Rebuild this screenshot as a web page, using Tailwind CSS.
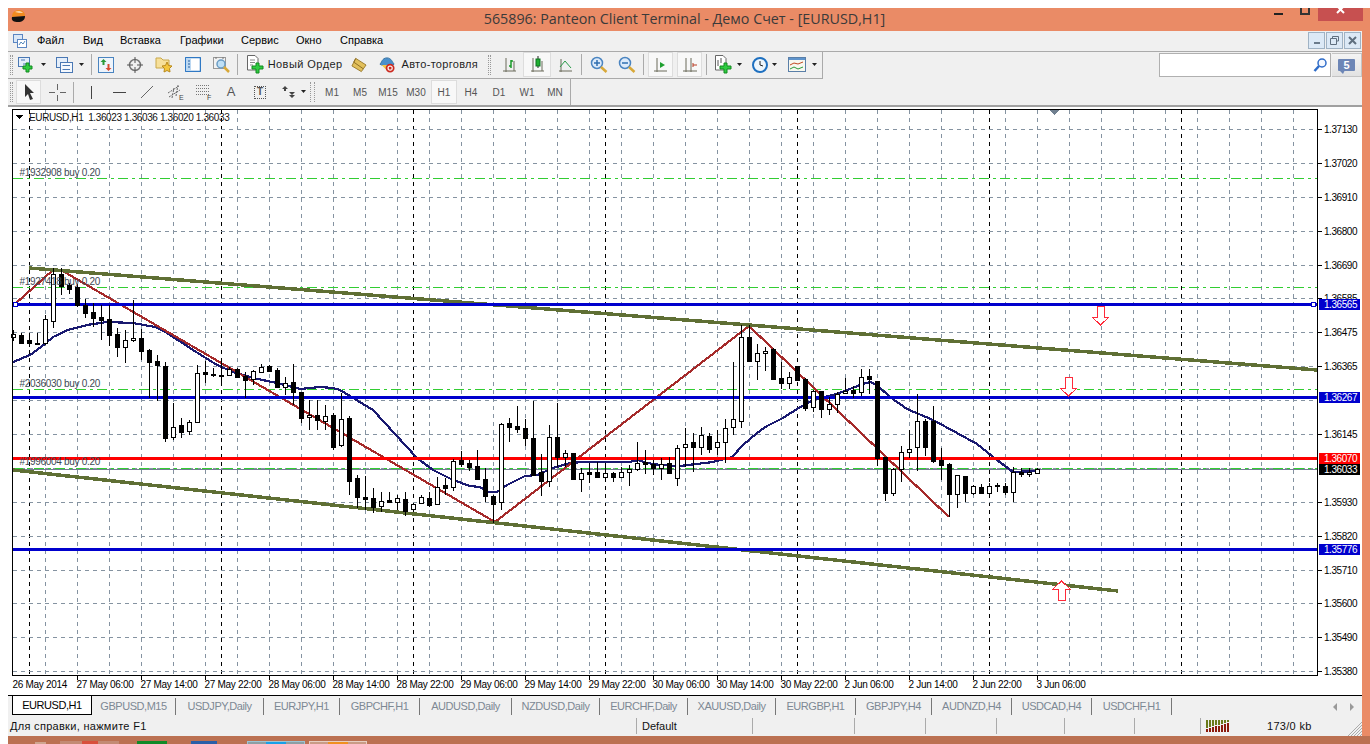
<!DOCTYPE html>
<html lang="ru">
<head>
    <meta charset="UTF-8">
    <title>Panteon Client Terminal</title>
    <script src="https://cdn.jsdelivr.net/npm/@tailwindcss/browser@4"></script>
</head>
<body class="w-[1370px] h-[744px] overflow-hidden bg-white pt-2 pl-2 font-['Liberation_Sans',sans-serif] text-[11px] text-black">
    <div class="flex flex-col h-[736px] bg-[#ea8b66]">
        <!-- title bar -->
        <div class="relative flex items-center justify-center h-[23px] font-['Open_Sans',sans-serif] text-[14.3px] text-[#3a3a3a] pb-[2px]">
            <svg class="absolute left-[3px] top-[1px]" width="15" height="15" viewBox="0 0 15 15"><path d="M1 8 C1 3 4 1 8 1 C12 1 14 4 14 7 Z" fill="#f08a20"/><path d="M4 3 C6 1.500 10 1.500 12 4 L8 4 Z" fill="#f8d0a0"/><path d="M1 8 L14 7 C14 11 11 13 7 13 C3 13 0 12 1 8 Z" fill="#111"/></svg>
            <span class="mr-[9px]">565896: Panteon Client Terminal - Демо Счет - [EURUSD,H1]</span>
            <div class="absolute left-[1266px] top-[5px] w-[9px] h-[2px] bg-[#222]"></div>
            <div class="absolute left-[1292px] top-0 w-[10px] h-[7px] border-2 border-t-0 border-[#333]"></div>
            <div class="absolute left-[1310px] top-0 w-[45px] h-[13px] flex items-start justify-center bg-[#c75050]">
                <svg width="10" height="8" viewBox="0 0 10 8"><path d="M1 -2 L8 5 M8 -2 L1 5" stroke="#fff" stroke-width="2"/></svg>
            </div>
        </div>

        <div class="flex flex-col flex-1 min-h-0 mr-2 bg-[#f0f0f0]">
            <!-- menu -->
            <div class="relative flex items-center h-[21px] border-b border-[#aaa] pb-[1px]">
                <svg class="ml-[5px] mr-[10px]" width="14" height="14" viewBox="0 0 14 14"><rect x=".5" y=".5" width="9" height="8" fill="#dbe8f6" stroke="#5b86c2"/><rect x="4.500" y="5.500" width="9" height="8" fill="#fff" stroke="#5b86c2"/><path d="M6 11 L8 8 L10 10 L12 7" fill="none" stroke="#58b" /></svg>
                <span class="w-[46px]">Файл</span>
                <span class="w-[37px]">Вид</span>
                <span class="w-[60px]">Вставка</span>
                <span class="w-[61px]">Графики</span>
                <span class="w-[55px]">Сервис</span>
                <span class="w-[44px]">Окно</span>
                <span>Справка</span>
                <div class="absolute right-[1px] top-[1px] flex gap-[1px]">
                    <div class="flex items-end justify-center w-[17px] h-[17px] pb-1 bg-[#dce9f6] border border-[#9fb2c4]"><div class="w-[6px] h-[2px] bg-[#6b7b8b]"></div></div>
                    <div class="flex items-center justify-center w-[17px] h-[17px] bg-[#dce9f6] border border-[#9fb2c4]"><svg width="9" height="9" viewBox="0 0 9 9"><path d="M2.500 2 V.5 H8.500 V5 H6.500 M.5 2.500 H6.500 V8.500 H.5 Z" fill="none" stroke="#5f6f7f"/></svg></div>
                    <div class="flex items-center justify-center w-[17px] h-[17px] bg-[#dce9f6] border border-[#9fb2c4]"><svg width="9" height="9" viewBox="0 0 9 9"><path d="M1 1 L8 8 M8 1 L1 8" stroke="#5f6f7f" stroke-width="2"/></svg></div>
                </div>
            </div>

            <!-- main toolbar -->
            <div class="flex h-[27px]">
                <div class="flex items-center w-[815px] h-[27px] pb-[1px] border-b border-r border-[#aaa]">
                    <div class="ml-[2px] w-[3px] h-[20px] border-x border-dotted border-[#999]"></div>
                    <div class="flex items-center justify-center w-7">
                        <svg width="18" height="18" viewBox="0 0 18 18"><rect x=".5" y="1.500" width="11" height="9" fill="#e4eefa" stroke="#4a78b4"/><path d="M3 4 H7 M5 8 H9" stroke="#4a78b4"/><path d="M8 7 H11 V10 H14 V13 H11 V16 H8 V13 H5 V10 H8 Z" fill="#2ecc40" stroke="#138a20"/></svg>
                    </div>
                    <div class="w-[10px]"><svg width="6" height="4"><path d="M0 0 H5 L2.500 3 Z" fill="#222"/></svg></div>
                    <div class="flex items-center justify-center w-7">
                        <svg width="18" height="18" viewBox="0 0 18 18"><rect x=".5" y="1.500" width="11" height="10" fill="#e4eefa" stroke="#4a78b4"/><rect x="4.500" y="6.500" width="12" height="10" fill="#f4f8fd" stroke="#4a78b4"/><path d="M6.500 9.500 H14 M6.500 13.500 H14" stroke="#4a78b4"/></svg>
                    </div>
                    <div class="w-[10px]"><svg width="6" height="4"><path d="M0 0 H5 L2.500 3 Z" fill="#222"/></svg></div>
                    <div class="ml-[2px] w-px h-[21px] bg-[#aaa]"></div>
                    <div class="flex items-center justify-center w-[29px]">
                        <svg width="16" height="16" viewBox="0 0 16 16"><rect x=".5" y=".5" width="15" height="15" fill="#eef4fb" stroke="#4a84c0"/><path d="M5.500 2 L8.500 5 H6.500 V8 H4.500 V5 H2.500 Z" fill="#2a9a3a"/><path d="M10.500 14 L7.500 11 H9.500 V7 H11.500 V11 H13.500 Z" fill="#d84a30"/></svg>
                    </div>
                    <div class="flex items-center justify-center w-[29px]">
                        <svg width="16" height="16" viewBox="0 0 16 16"><circle cx="8" cy="8" r="5.500" fill="none" stroke="#777" stroke-width="1.500"/><path d="M8 0 V6 M8 10 V16 M0 8 H6 M10 8 H16" stroke="#555"/></svg>
                    </div>
                    <div class="flex items-center justify-center w-[29px]">
                        <svg width="18" height="17" viewBox="0 0 18 17"><path d="M1 2 H6 L8 4 H14 V12 H1 Z" fill="#f7e09a" stroke="#c9a84a"/><path d="M12 6 L13.500 9.500 L17 10 L14.500 12.500 L15 16 L12 14.500 L9 16 L9.500 12.500 L7 10 L10.500 9.500 Z" fill="#f4c63c" stroke="#b98a1c"/></svg>
                    </div>
                    <div class="flex items-center justify-center w-[29px]">
                        <svg width="16" height="15" viewBox="0 0 16 15"><rect x=".5" y=".5" width="15" height="14" rx="1" fill="#fff" stroke="#2f78c4" stroke-width="1.500"/><rect x="1" y="1" width="5" height="13" fill="#bcd8f2"/><path d="M3 4 H5 M3 7 H5 M3 10 H5" stroke="#245e9e"/></svg>
                    </div>
                    <div class="flex items-center justify-center w-[29px]">
                        <svg width="18" height="18" viewBox="0 0 18 18"><rect x=".5" y="1.500" width="12" height="11" fill="#f2f2f2" stroke="#999"/><path d="M3 1 V3 M10 1 V3" stroke="#777"/><circle cx="8" cy="8" r="4" fill="#bfe0f6" stroke="#6a9cc4" stroke-width="1.500"/><path d="M11 11 L16 16" stroke="#d8a838" stroke-width="2.500"/></svg>
                    </div>
                    <div class="w-px h-[21px] bg-[#aaa]"></div>
                    <div class="flex items-center justify-center ml-[9px]">
                        <svg width="17" height="19" viewBox="0 0 17 19"><path d="M.5 .5 H8 L11 3.500 V15 H.5 Z" fill="#fff" stroke="#666"/><path d="M3 5 H8 M3 7.500 H8 M3 10 H6" stroke="#888"/><path d="M9 8 H12 V11 H16 V14 H12 V18 H9 V14 H5 V11 H9 Z" fill="#2ecc40" stroke="#138a20"/></svg>
                    </div>
                    <span class="ml-[4px] w-[83px] tracking-[.45px] text-[#1f1f1f]">Новый Ордер</span>
                    <div class="flex items-center justify-center w-4 mr-3">
                        <svg width="17" height="16" viewBox="0 0 17 16"><path d="M5 1 L16 8 L11 15 L1 9 Z" fill="#e2c05c" stroke="#9a7a2a"/><path d="M5 1 L3 5 L13 12" fill="none" stroke="#8a6a20"/></svg>
                    </div>
                    <div class="flex items-center justify-center w-4">
                        <svg width="18" height="18" viewBox="0 0 18 18"><path d="M1 8 C3 7 3 1 9 1 C14 1 15 6 17 8 C14 11 5 11 1 8 Z" fill="#4a90cc" stroke="#2c6a9c"/><path d="M3 9 C6 13 9 15 11 15 L14 9 Z" fill="#f2c84a"/><circle cx="12.500" cy="12.500" r="4" fill="#fff" stroke="#cc2a20" stroke-width="2"/><rect x="11" y="11" width="3" height="3" fill="#cc2a20"/></svg>
                    </div>
                    <span class="ml-[7px] w-[87px] tracking-[.3px] text-[#1f1f1f]">Авто-торговля</span>
                    <div class="w-[3px] h-[20px] border-x border-dotted border-[#999]"></div>
                    <div class="flex items-center justify-center w-7 ml-[4px]">
                        <svg width="15" height="16" viewBox="0 0 15 16"><path d="M1 14 H14 M4 1 V15 M12 14 V4" stroke="#6a6a5a" fill="none"/><path d="M9 3 V11 M9 4 H11 M7 9 H9" stroke="#1a9a2a" stroke-width="1.500" fill="none"/></svg>
                    </div>
                    <div class="flex items-center justify-center w-7 h-[25px] bg-[#f8f8f8] border border-[#ddd]">
                        <svg width="15" height="17" viewBox="0 0 15 17"><path d="M1 15 H14 M3 2 V16 M12 15 V5" stroke="#6a6a5a" fill="none"/><path d="M8 0 V12" stroke="#222"/><rect x="6" y="3" width="4" height="7" fill="#1fb030" stroke="#0f7020"/></svg>
                    </div>
                    <div class="flex items-center justify-center w-7">
                        <svg width="15" height="16" viewBox="0 0 15 16"><path d="M1 14 H14 M3 2 V15" stroke="#6a6a5a" fill="none"/><path d="M2 10 L7 4 L13 11" stroke="#2a9a4a" fill="none"/></svg>
                    </div>
                    <div class="ml-[2px] mr-[3px] w-px h-[21px] bg-[#aaa]"></div>
                    <div class="flex items-center justify-center w-7">
                        <svg width="18" height="18" viewBox="0 0 18 18"><circle cx="7" cy="7" r="5.500" fill="#dceafa" stroke="#4a84c0" stroke-width="1.500"/><path d="M4 7 H10 M7 4 V10" stroke="#2f6fb0" stroke-width="1.500"/><path d="M11 11 L16.500 16" stroke="#d8a838" stroke-width="2.500"/></svg>
                    </div>
                    <div class="flex items-center justify-center w-7">
                        <svg width="18" height="18" viewBox="0 0 18 18"><circle cx="7" cy="7" r="5.500" fill="#dceafa" stroke="#4a84c0" stroke-width="1.500"/><path d="M4 7 H10" stroke="#2f6fb0" stroke-width="1.500"/><path d="M11 11 L16.500 16" stroke="#d8a838" stroke-width="2.500"/></svg>
                    </div>
                    <div class="mx-[2px] w-px h-[21px] bg-[#aaa]"></div>
                    <div class="flex items-center justify-center w-[25px] h-[25px] ml-[2px] bg-[#f8f8f8] border border-[#ddd]">
                        <svg width="15" height="16" viewBox="0 0 15 16"><path d="M1 14 H14 M4 1 V15" stroke="#6a6a5a" fill="none"/><path d="M7 5 L12 8 L7 11 Z" fill="#1fa030"/></svg>
                    </div>
                    <div class="flex items-center justify-center w-[25px] h-[25px] ml-[4px] bg-[#f8f8f8] border border-[#ddd]">
                        <svg width="16" height="16" viewBox="0 0 16 16"><path d="M1 14 H15 M4 1 V15 M9 1 V15" stroke="#6a6a5a" fill="none"/><path d="M11 8 H15 M11 6 V10" stroke="#b83a20"/></svg>
                    </div>
                    <div class="ml-[4px] w-px h-[21px] bg-[#aaa]"></div>
                    <div class="flex items-center justify-center w-7 ml-[2px]">
                        <svg width="17" height="19" viewBox="0 0 17 19"><path d="M.5 .5 H8 L11 3.500 V15 H.5 Z" fill="#fff" stroke="#666"/><path d="M3 5 V11 M6 3 V8" stroke="#555"/><path d="M9 8 H12 V11 H16 V14 H12 V18 H9 V14 H5 V11 H9 Z" fill="#2ecc40" stroke="#138a20"/></svg>
                    </div>
                    <div class="w-[10px]"><svg width="6" height="4"><path d="M0 0 H5 L2.500 3 Z" fill="#222"/></svg></div>
                    <div class="flex items-center justify-center w-[18px] ml-[4px]">
                        <svg width="16" height="16" viewBox="0 0 16 16"><circle cx="8" cy="8" r="7" fill="#eef6fc" stroke="#1e70c0" stroke-width="2"/><path d="M8 4 V8 L11 9" fill="none" stroke="#222"/></svg>
                    </div>
                    <div class="w-[10px] ml-[3px]"><svg width="6" height="4"><path d="M0 0 H5 L2.500 3 Z" fill="#222"/></svg></div>
                    <div class="flex items-center justify-center w-[28px] ml-[1px]">
                        <svg width="18" height="15" viewBox="0 0 18 15"><rect x=".5" y=".5" width="17" height="14" fill="#f8f8f0" stroke="#5a7fa8"/><rect x="1" y="1" width="16" height="2" fill="#5f94cc"/><path d="M2 8 L6 6 L10 7 L15 5" stroke="#c04a20" fill="none"/><path d="M2 12 L6 10 L10 12 L15 10" stroke="#2a9a3a" fill="none"/></svg>
                    </div>
                    <div class="w-[10px] ml-[1px]"><svg width="6" height="4"><path d="M0 0 H5 L2.500 3 Z" fill="#222"/></svg></div>
                </div>
                <div class="flex ml-auto mr-px mt-px h-[24px] border border-[#b0b0b0] bg-white w-[172px] justify-end items-center pr-[3px]">
                    <svg width="14" height="16" viewBox="0 0 14 16"><circle cx="9" cy="6" r="4" fill="#f4f8ff" stroke="#2f6cc8" stroke-width="1.500"/><path d="M6 9 L1.500 14" stroke="#2f6cc8" stroke-width="2.500"/></svg>
                </div>
                <div class="flex items-center justify-center w-[30px] h-[24px] mt-px bg-gradient-to-b from-[#f4f4f4] to-[#e2e2e2] border border-l-0 border-[#c4c4c4]">
                    <div class="relative flex items-center justify-center w-[17px] h-[12px] rounded-[1px] bg-[#6d86b6] text-white font-bold text-[11px] leading-none">5<span class="absolute left-[1px] top-[11px] w-0 h-0 border-t-[4px] border-t-[#6d86b6] border-l-[4px] border-l-transparent border-r-[2px] border-r-transparent"></span></div>
                </div>
            </div>

            <!-- drawing and period toolbar -->
            <div class="flex items-center w-[563px] h-[26px] border-r border-[#aaa] text-[#555]">
                <div class="ml-[2px] w-[3px] h-[20px] border-x border-dotted border-[#999]"></div>
                <div class="flex items-center justify-center w-[25px] h-[24px] ml-[3px] bg-[#f8f8f8] border border-[#ddd]">
                    <svg width="12" height="16" viewBox="0 0 12 16"><path d="M2 0 L11 9 H7 L10 15 L7 16 L5 10 L2 13 Z" fill="#333"/></svg>
                </div>
                <div class="flex items-center justify-center w-7 ml-[2px]">
                    <svg width="17" height="17" viewBox="0 0 17 17"><path d="M0 8.500 H6 M11 8.500 H17 M8.500 0 V6 M8.500 11 V17" stroke="#666"/></svg>
                </div>
                <div class="w-px h-[21px] bg-[#aaa] ml-[2px]"></div>
                <div class="flex items-center justify-center w-7 ml-[3px]"><div class="w-px h-[13px] bg-[#444]"></div></div>
                <div class="flex items-center justify-center w-7"><div class="w-[13px] h-px bg-[#444]"></div></div>
                <div class="flex items-center justify-center w-7">
                    <svg width="14" height="14" viewBox="0 0 14 14"><path d="M1 13 L13 1" stroke="#666"/></svg>
                </div>
                <div class="flex items-center justify-center w-[30px]">
                    <svg width="18" height="18" viewBox="0 0 18 18"><path d="M1 10 L12 3 M2 14 L13 7 M5 15 L7 5 M9 13 L11 2" stroke="#666" fill="none" stroke-dasharray="2 1"/><text x="12" y="17" font-size="7" fill="#444" font-family="Liberation Sans">E</text></svg>
                </div>
                <div class="flex items-center justify-center w-[26px]">
                    <svg width="18" height="18" viewBox="0 0 18 18"><path d="M1 2.500 H14 M1 5.500 H14 M1 8.500 H14 M1 11.500 H14" stroke="#777" stroke-dasharray="1 1"/><text x="12" y="17" font-size="7" fill="#444" font-family="Liberation Sans">F</text></svg>
                </div>
                <div class="flex items-center justify-center w-7 text-[13px] text-[#555]">A</div>
                <div class="flex items-center justify-center w-[30px]">
                    <div class="flex items-center justify-center w-[12px] h-[13px] border border-dotted border-[#555] text-[10px] font-bold text-[#555] leading-none">T</div>
                </div>
                <div class="flex items-center justify-center w-[26px]">
                    <svg width="15" height="14" viewBox="0 0 15 14"><path d="M1 4 L4 1 L7 4 L5 4 V6 H3 V4 Z" fill="#444"/><path d="M8 7 L11 10 L14 7 H12 Z M8 10 L11 13 L14 10" fill="#444"/></svg>
                </div>
                <div class="w-[10px]"><svg width="6" height="4"><path d="M0 0 H5 L2.500 3 Z" fill="#222"/></svg></div>
                <div class="w-[5px] h-[20px] ml-[-1px] border-x border-dotted border-[#999]"></div>
                <div class="flex items-center justify-center w-[28px] ml-[3px] text-[10px]">M1</div>
                <div class="flex items-center justify-center w-[28px] text-[10px]">M5</div>
                <div class="flex items-center justify-center w-[28px] text-[10px]">M15</div>
                <div class="flex items-center justify-center w-[28px] text-[10px]">M30</div>
                <div class="flex items-center justify-center w-[26px] h-[24px] mx-px bg-[#f8f8f8] border border-[#ddd] text-[10px]">H1</div>
                <div class="flex items-center justify-center w-[28px] text-[10px] ml-[-1px]">H4</div>
                <div class="flex items-center justify-center w-[28px] text-[10px]">D1</div>
                <div class="flex items-center justify-center w-[28px] text-[10px]">W1</div>
                <div class="flex items-center justify-center w-[28px] text-[10px]">MN</div>
            </div>
            <div class="h-[2px] bg-[#a0a0a0]"></div>

            <!-- chart -->
            <div class="h-[588px] bg-white">
                <svg id="chart" width="1354" height="588" viewBox="8 107 1354 588" shape-rendering="crispEdges" font-family="Liberation Sans" font-size="10" letter-spacing="-0.3"></svg>
            </div>

            <!-- symbol tabs -->
            <div class="flex items-start h-[21px] border-t border-black text-[#7d8894] tracking-[-0.45px]">
                <div class="flex items-center justify-center ml-[4px] w-[80px] h-[19px] bg-white border-x border-b border-black text-black">EURUSD,H1</div>
                <div class="flex items-center justify-center w-[84px] h-[17px] mt-[2px] border-r border-[#777]">GBPUSD,M15</div>
                <div class="flex items-center justify-center w-[88px] h-[17px] mt-[2px] border-r border-[#777]">USDJPY,Daily</div>
                <div class="flex items-center justify-center w-[76px] h-[17px] mt-[2px] border-r border-[#777]">EURJPY,H1</div>
                <div class="flex items-center justify-center w-[80px] h-[17px] mt-[2px] border-r border-[#777]">GBPCHF,H1</div>
                <div class="flex items-center justify-center w-[92px] h-[17px] mt-[2px] border-r border-[#777]">AUDUSD,Daily</div>
                <div class="flex items-center justify-center w-[88px] h-[17px] mt-[2px] border-r border-[#777]">NZDUSD,Daily</div>
                <div class="flex items-center justify-center w-[88px] h-[17px] mt-[2px] border-r border-[#777]">EURCHF,Daily</div>
                <div class="flex items-center justify-center w-[88px] h-[17px] mt-[2px] border-r border-[#777]">XAUUSD,Daily</div>
                <div class="flex items-center justify-center w-[80px] h-[17px] mt-[2px] border-r border-[#777]">EURGBP,H1</div>
                <div class="flex items-center justify-center w-[76px] h-[17px] mt-[2px] border-r border-[#777]">GBPJPY,H4</div>
                <div class="flex items-center justify-center w-[80px] h-[17px] mt-[2px] border-r border-[#777]">AUDNZD,H4</div>
                <div class="flex items-center justify-center w-[80px] h-[17px] mt-[2px] border-r border-[#777]">USDCAD,H4</div>
                <div class="flex items-center justify-center w-[80px] h-[17px] mt-[2px] border-r border-[#777]">USDCHF,H1</div>
                <div class="flex items-center gap-[12px] ml-auto mr-[7px] h-[17px] mt-[2px]">
                    <svg width="5" height="8"><path d="M4 0 V8 L0 4 Z" fill="#999"/></svg>
                    <svg width="5" height="8"><path d="M0 0 V8 L4 4 Z" fill="#999"/></svg>
                </div>
            </div>

            <!-- status bar -->
            <div class="relative flex items-center h-5 text-[#111]">
                <span class="w-[628px] pl-[2px] tracking-[.3px]">Для справки, нажмите F1</span>
                <div class="w-[116px] h-4 pl-[5px] border-l border-[#aaa]">Default</div>
                <div class="w-[102px] h-4 border-l border-[#aaa]"></div>
                <div class="w-[71px] h-4 border-l border-[#aaa]"></div>
                <div class="w-[71px] h-4 border-l border-[#aaa]"></div>
                <div class="w-[68px] h-4 border-l border-[#aaa]"></div>
                <div class="w-[70px] h-4 border-l border-[#aaa]"></div>
                <div class="w-[66px] h-4 border-l border-[#aaa]"></div>
                <div class="flex items-center h-4 pl-[5px] border-l border-[#aaa]">
                    <svg width="24" height="12" viewBox="0 0 24 12" shape-rendering="crispEdges"><g fill="#6a7a1a"><rect x="0" y="0" width="2" height="8"/><rect x="3" y="0" width="2" height="7"/><rect x="6" y="0" width="2" height="6"/><rect x="9" y="0" width="2" height="5"/><rect x="12" y="0" width="2" height="5"/><rect x="15" y="0" width="2" height="4"/><rect x="18" y="0" width="2" height="3"/><rect x="21" y="0" width="2" height="2"/></g><g fill="#8c1a0c"><rect x="0" y="9" width="2" height="3"/><rect x="3" y="8" width="2" height="4"/><rect x="6" y="7" width="2" height="5"/><rect x="9" y="6" width="2" height="6"/><rect x="12" y="6" width="2" height="6"/><rect x="15" y="5" width="2" height="7"/><rect x="18" y="4" width="2" height="8"/><rect x="21" y="3" width="2" height="9"/></g></svg>
                    <span class="ml-[37px] tracking-[.3px]">173/0 kb</span>
                </div>
                <svg class="absolute right-0 bottom-0" width="15" height="15" viewBox="0 0 15 15"><path d="M15 1 L1 15 M15 4 L4 15 M15 7 L7 15 M15 10 L10 15 M15 13 L13 15" stroke="#aaa"/></svg>
            </div>
        </div>

        <!-- bit of the desktop taskbar under the window -->
        <div class="flex items-end h-2 bg-[#bb7152] shrink-0">
            <div class="ml-[27px] w-[11px] h-[2px] bg-[#cfa58f]"></div>
            <div class="ml-[14px] w-[59px] h-[3px] flex justify-center bg-[#c38b74]"><div class="w-4 h-[3px] bg-[#d8503c]"></div></div>
            <div class="ml-[18px] w-[30px] h-[3px] bg-[#108a28]"></div>
            <div class="ml-[24px] w-[26px] h-[3px] bg-[#2a5fa8]"></div>
            <div class="ml-[30px] w-[58px] h-[3px] flex justify-center bg-[#8d9fa4] border-t border-x border-[#9cc4d4]"><div class="w-5 h-[2px] bg-[#18a0e8]"></div></div>
            <div class="ml-[4px] w-[58px] h-[3px] flex justify-center bg-[#c99c86] border-t border-x border-[#e6cfc2]"><div class="w-5 h-[2px] bg-[#f09020]"></div></div>
        </div>
    </div>

    <script>
        // candles, one every 8px starting at x=13: [top, bottom, high, low, white?]
        const candles = [
            [334,337,330,341,1],[335,343,333,344,0],[340,343,333,347,0],[343,344,333,345,0],[319,343,315,345,1],
            [274,321,268,328,1],[274,286,268,295,0],[285,289,283,294,0],[287,305,284,307,0],[305,313,299,318,0],
            [312,318,303,327,0],[317,320,305,340,0],[319,335,305,346,0],[334,347,328,357,0],[340,347,330,363,1],
            [338,340,300,342,1],[338,351,329,360,0],[350,362,349,398,0],[361,365,355,401,0],[366,438,362,442,0],
            [427,437,403,440,1],[425,432,418,438,0],[422,431,420,435,1],[373,422,365,423,1],[372,374,361,383,0],
            [374,375,368,377,0],[375,376,362,382,0],[369,375,367,376,1],[369,377,368,378,0],[376,380,372,398,0],
            [371,379,370,385,1],[367,372,364,373,1],[366,371,365,372,0],[370,387,368,388,0],[383,387,377,395,1],
            [382,392,364,405,0],[392,418,392,423,0],[415,417,400,430,1],[415,420,400,430,0],[416,421,405,430,1],
            [415,447,413,450,0],[419,445,393,447,1],[418,481,416,495,0],[478,497,475,508,0],[497,499,476,510,0],
            [498,507,488,513,0],[501,506,492,512,1],[500,502,492,503,0],[498,502,495,510,1],[499,511,492,516,0],
            [504,509,503,510,1],[497,503,495,504,1],[498,505,492,507,0],[487,504,477,505,1],[485,488,478,495,0],
            [461,487,459,491,1],[460,464,451,467,0],[463,467,460,471,0],[466,479,450,480,0],[479,496,468,502,0],
            [496,504,495,523,0],[424,502,423,510,1],[423,427,418,442,0],[426,429,406,433,0],[428,438,419,446,0],
            [438,475,401,476,0],[472,481,454,496,0],[437,481,425,487,1],[437,457,403,467,0],[453,457,450,467,1],
            [453,479,453,480,0],[473,479,468,492,1],[472,474,463,483,0],[472,477,462,478,0],[473,477,463,478,1],
            [473,477,472,482,0],[472,477,467,478,1],[469,472,465,486,1],[463,469,442,471,1],[462,464,450,474,0],
            [464,468,460,475,0],[464,468,458,480,1],[463,473,457,474,0],[448,478,445,486,1],[444,447,428,467,1],
            [442,447,433,472,0],[435,447,427,455,1],[436,449,433,453,0],[442,447,430,455,1],[428,442,419,463,1],
            [419,427,362,435,1],[337,421,325,428,1],[337,361,325,362,0],[353,361,344,380,1],[351,353,347,371,1],
            [349,379,348,380,0],[378,383,362,389,0],[377,383,372,389,1],[366,380,366,381,0],[379,408,378,411,0],
            [391,407,390,412,1],[391,409,391,418,0],[404,409,397,415,1],[394,404,392,413,1],[391,393,378,394,1],
            [390,393,386,398,0],[377,392,369,396,1],[376,379,369,394,0],[381,458,381,466,0],[457,493,457,501,0],
            [469,493,468,496,1],[452,469,446,482,1],[449,452,430,458,1],[421,447,394,471,1],[421,447,419,456,0],
            [421,461,406,463,0],[460,465,448,480,0],[464,494,463,517,0],[475,494,475,508,1],[476,493,476,502,0],
            [486,493,485,495,1],[487,493,484,494,0],[486,493,483,495,1],[485,486,483,492,0],[486,492,483,495,0],
            [472,492,467,502,1],[472,474,468,477,0],[472,474,468,477,1],[469,473,468,474,1]
        ];
        const ma = '13,362 30,355 45,344 53,337 68,330 87,325 107,322 133,323 155,327 167,333 193,350 217,365 233,372 253,378 277,383 300,389 320,387 333,388 340,390 373,410 417,458 433,470 453,480 470,486 480,487 487,492 497,492 507,485 525,476 537,475 553,468 570,463 583,462 597,462 630,462 638,460 647,463 660,465 680,466 713,462 732,457 743,445 757,433 767,426 783,418 797,409 813,400 837,394 860,385 870,382 877,385 890,397 907,409 933,420 957,433 977,444 997,460 1013,472 1037,471';
        const prices = [[129,'1.37130'],[163,'1.37020'],[197,'1.36910'],[231,'1.36800'],[265,'1.36690'],[298,'1.36585'],[332,'1.36475'],[366,'1.36365'],[434,'1.36145'],[502,'1.35930'],[536,'1.35820'],[570,'1.35710'],[603,'1.35600'],[637,'1.35490'],[671,'1.35380']];
        const tags = [[304,'1.36565','#0000cd'],[397,'1.36267','#0000cd'],[458,'1.36070','#ff0000'],[469,'1.36033','#000000'],[549,'1.35776','#0000cd']];
        const times = ['27 May 06:00','27 May 14:00','27 May 22:00','28 May 06:00','28 May 14:00','28 May 22:00','29 May 06:00','29 May 14:00','29 May 22:00','30 May 06:00','30 May 14:00','30 May 22:00','2 Jun 06:00','2 Jun 14:00','2 Jun 22:00','3 Jun 06:00'];
        const hGrid = [129,163,197,231,265,298,332,366,400,434,468,502,536,570,603,637,671];

        let s = '';
        // grid
        for (let x = 45; x < 1317; x += 32) s += `<line x1="${x+.5}" y1="110" x2="${x+.5}" y2="675" stroke="#8593a1" stroke-dasharray="4 4"/>`;
        for (let x = 29; x < 1317; x += 192) s += `<line x1="${x+.5}" y1="110" x2="${x+.5}" y2="675" stroke="#000" stroke-dasharray="4 4"/>`;
        hGrid.forEach(y => s += `<line x1="13" y1="${y+.5}" x2="1317" y2="${y+.5}" stroke="#8593a1" stroke-dasharray="4 4"/>`);

        // order lines
        [178,287,389,468].forEach(y => s += `<line x1="13" y1="${y+.5}" x2="1317" y2="${y+.5}" stroke="#32cd32" stroke-dasharray="10 4 3 4"/>`);
        s += `<line x1="13" y1="469.500" x2="1317" y2="469.500" stroke="#708090"/>`;

        // trend lines and levels
        s += `<polyline points="${ma}" fill="none" stroke="#191970" stroke-width="2.200"/>`;
        s += `<polyline points="15,304 53,270 61,270 495,522 749,326 949,517" fill="none" stroke="#a52a2a" stroke-width="2.200"/>`;
        s += `<line x1="29" y1="268" x2="1317" y2="370" stroke="#5f6f34" stroke-width="3.500"/>`;
        s += `<line x1="13" y1="470" x2="1118" y2="591" stroke="#5f6f34" stroke-width="3.500"/>`;
        [304,397,549].forEach(y => s += `<rect x="13" y="${y-1}" width="1304" height="3" fill="#0000cd"/>`);
        s += `<rect x="13" y="457" width="1304" height="3" fill="#ff0000"/>`;
        [15,1313].forEach(x => s += `<rect x="${x-1.5}" y="302.500" width="4" height="4" fill="#fff" stroke="#0000cd"/>`);

        // candles
        candles.forEach((c, i) => {
            const x = 13 + i * 8;
            s += `<line x1="${x+.5}" y1="${c[2]}" x2="${x+.5}" y2="${c[3]}" stroke="#000"/>`;
            s += `<rect x="${x-1.5}" y="${c[0]+.5}" width="4" height="${Math.max(c[1]-c[0],1)}" fill="${c[4] ? '#fff' : '#000'}" stroke="#000"/>`;
        });

        // arrows from the signal objects
        const arrow = (x, y, d) => `<polygon points="${x-3},${y} ${x+4},${y} ${x+4},${y+d*11} ${x+9},${y+d*11} ${x+.5},${y+d*19} ${x-8},${y+d*11} ${x-3},${y+d*11}" fill="#fff" stroke="#ff2a3a"/>`;
        s += arrow(1100, 306, 1) + arrow(1068, 377, 1) + arrow(1061, 600, -1);

        // order labels
        [['#1932908 buy 0.20',176],['#1927418 buy 0.20',285],['#2036030 buy 0.20',387],['#1996004 buy 0.20',465]].forEach(l => {
            s += `<text x="19.500" y="${l[1]}" fill="#3d4a55" shape-rendering="auto">${l[0]}</text>`;
        });

        // frame
        s += `<rect x="12.500" y="109.500" width="1305" height="566" fill="none" stroke="#000"/>`;
        s += `<polygon points="1049,110 1060,110 1054.500,115" fill="#708090"/>`;
        s += `<polygon points="16,115 23,115 19.500,119" fill="#000"/>`;
        s += `<text x="29" y="121" fill="#111" letter-spacing="-0.38">EURUSD,H1\u00a0\u00a01.36023 1.36036 1.36020 1.36033</text>`;

        // price axis
        prices.forEach(p => {
            s += `<line x1="1318" y1="${p[0]+.5}" x2="1322" y2="${p[0]+.5}" stroke="#000"/>`;
            s += `<text x="1324" y="${p[0]+4}" fill="#000" letter-spacing="-0.45">${p[1]}</text>`;
        });
        tags.forEach(t => {
            s += `<rect x="1319" y="${t[0]-5}" width="41" height="11" fill="${t[2]}"/>`;
            s += `<text x="1324" y="${t[0]+4}" fill="#fff" letter-spacing="-0.45">${t[1]}</text>`;
        });

        // time axis
        s += `<text x="12.500" y="688" fill="#000">26 May 2014</text>`;
        times.forEach((t, i) => {
            const x = 77 + i * 64;
            s += `<line x1="${x+.5}" y1="676" x2="${x+.5}" y2="680" stroke="#000"/>`;
            s += `<text x="${x-.5}" y="688" fill="#000">${t}</text>`;
        });

        document.getElementById('chart').innerHTML = s;
    </script>
</body>
</html>
